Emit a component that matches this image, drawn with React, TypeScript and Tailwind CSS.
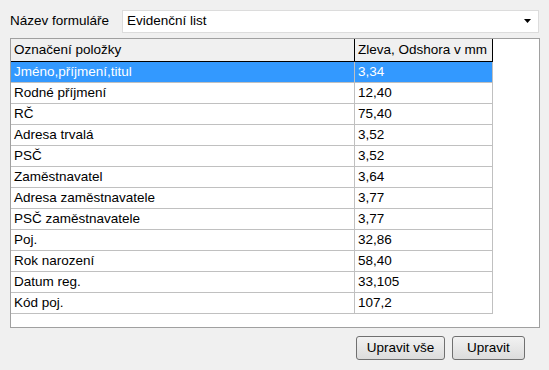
const ROWS: [string, string][] = [
  ["Jméno,příjmení,titul", "3,34"],
  ["Rodné příjmení", "12,40"],
  ["RČ", "75,40"],
  ["Adresa trvalá", "3,52"],
  ["PSČ", "3,52"],
  ["Zaměstnavatel", "3,64"],
  ["Adresa zaměstnavatele", "3,77"],
  ["PSČ zaměstnavatele", "3,77"],
  ["Poj.", "32,86"],
  ["Rok narození", "58,40"],
  ["Datum reg.", "33,105"],
  ["Kód poj.", "107,2"],
];

function Button({ label, width }: { label: string; width: string }) {
  return (
    <button
      type="button"
      className={`${width} h-[24px] rounded-[3px] border border-[#707070] bg-gradient-to-b from-[#f2f2f2] to-[#dcdcdc] text-[13.5px] text-black leading-none`}
    >
      {label}
    </button>
  );
}

export default function App() {
  return (
    <div className="w-[549px] h-[370px] bg-[#f0f0f0] flex flex-col pl-[10px] pt-[10px] font-['Liberation_Sans',Arial,sans-serif] text-[13.5px] text-black">
      <div className="flex items-center h-[23px]">
        <span className="w-[112px]">Název formuláře</span>
        <div className="w-[417px] h-[23px] bg-white border border-[#dcdcdc] flex items-center pl-[4px] pr-[6px]">
          <span className="flex-1">Evidenční list</span>
          <svg width="8" height="5" viewBox="0 0 8 5">
            <path d="M0 0 H7 L3.5 4 Z" fill="#000" />
          </svg>
        </div>
      </div>

      <div className="mt-[5px] w-[530px] h-[290px] bg-white border border-[#a0a0a0]">
        <div className="flex h-[23px] w-[482px] bg-[#f0f0f0] border-b border-black">
          <div className="w-[344px] border-r border-black pl-[3px] flex items-center">
            Označení položky
          </div>
          <div className="w-[138px] border-r border-black pl-[3px] flex items-center">
            Zleva, Odshora v mm
          </div>
        </div>
        {ROWS.map(([name, value], i) => (
          <div
            key={name}
            className={`flex h-[21px] w-[482px] border-b border-[#c0c0c0] ${i === 0 ? "bg-[#3399ff] text-white" : ""}`}
          >
            <div className="w-[344px] border-r border-[#c0c0c0] pl-[3px] flex items-center">
              {name}
            </div>
            <div className="w-[138px] border-r border-[#c0c0c0] pl-[3px] flex items-center">
              {value}
            </div>
          </div>
        ))}
      </div>

      <div className="flex justify-end gap-[7px] mt-[8px] w-[515px]">
        <Button label="Upravit vše" width="w-[89px]" />
        <Button label="Upravit" width="w-[73px]" />
      </div>
    </div>
  );
}
